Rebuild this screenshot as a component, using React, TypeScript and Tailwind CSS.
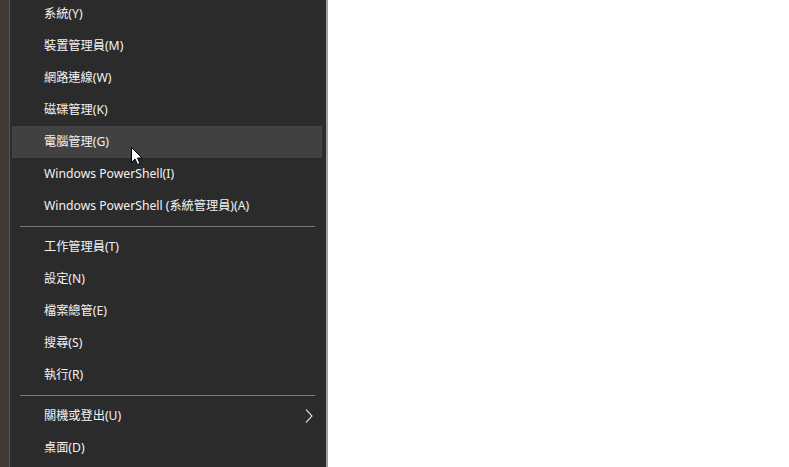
import React from 'react';

const groups: string[][] = [
  [
    '系統(Y)',
    '裝置管理員(M)',
    '網路連線(W)',
    '磁碟管理(K)',
    '電腦管理(G)',
    'Windows PowerShell(I)',
    'Windows PowerShell (系統管理員)(A)',
  ],
  ['工作管理員(T)', '設定(N)', '檔案總管(E)', '搜尋(S)', '執行(R)'],
  ['關機或登出(U)', '桌面(D)'],
];

const font = { fontFamily: '"Segoe UI", "Noto Sans", "Noto Sans CJK TC", sans-serif' };

export default function App() {
  return (
    <div className="flex h-[467px] w-[789px] overflow-hidden bg-white" style={font}>
      <div className="w-[9px] shrink-0 bg-[#3f3a33]" />
      <div className="w-px shrink-0 bg-[#5a5752]" />
      <div className="relative w-[316px] shrink-0 bg-[#2b2b2b]">
        <div className="-mt-[2px] flex flex-col">
          {groups.map((g, gi) => (
            <React.Fragment key={gi}>
              {gi > 0 && (
                <div className="flex h-[9px] items-center pl-[10px] pr-[11px]">
                  <div className="h-px w-full bg-[#7a7a7a]" />
                </div>
              )}
              {g.map((label) => {
                const hover = label === '電腦管理(G)';
                const sub = label === '關機或登出(U)';
                return (
                  <div
                    key={label}
                    className={`flex h-[32px] items-center justify-between pl-[34px] pr-[12px] text-[12.2px] text-[#f2f2f2] ${
                      hover ? 'mx-[2px] w-[310px] bg-[#414141] !pl-[32px]' : ''
                    }`}
                  >
                    <span>{label}</span>
                    {sub && (
                      <svg viewBox="0 0 10 16" className="h-[16px] w-[10px]" fill="none" stroke="#d0d0d0" strokeWidth="1.2">
                        <path d="M2 1.5 L8 8 L2 14.5" />
                      </svg>
                    )}
                  </div>
                );
              })}
            </React.Fragment>
          ))}
        </div>
        <svg viewBox="0 0 12 19" className="absolute left-[121px] top-[147px] h-[19px] w-[12px]">
          <path d="M0.5 0.5 L0.5 15.5 L4 12 L6.5 17.5 L9 16.5 L6.5 11 L11 11 Z" fill="#fff" stroke="#000" strokeWidth="1" />
        </svg>
      </div>
      <div className="w-[2px] shrink-0 bg-[#a29c96]" />
      <div className="flex-1 bg-white" />
    </div>
  );
}
